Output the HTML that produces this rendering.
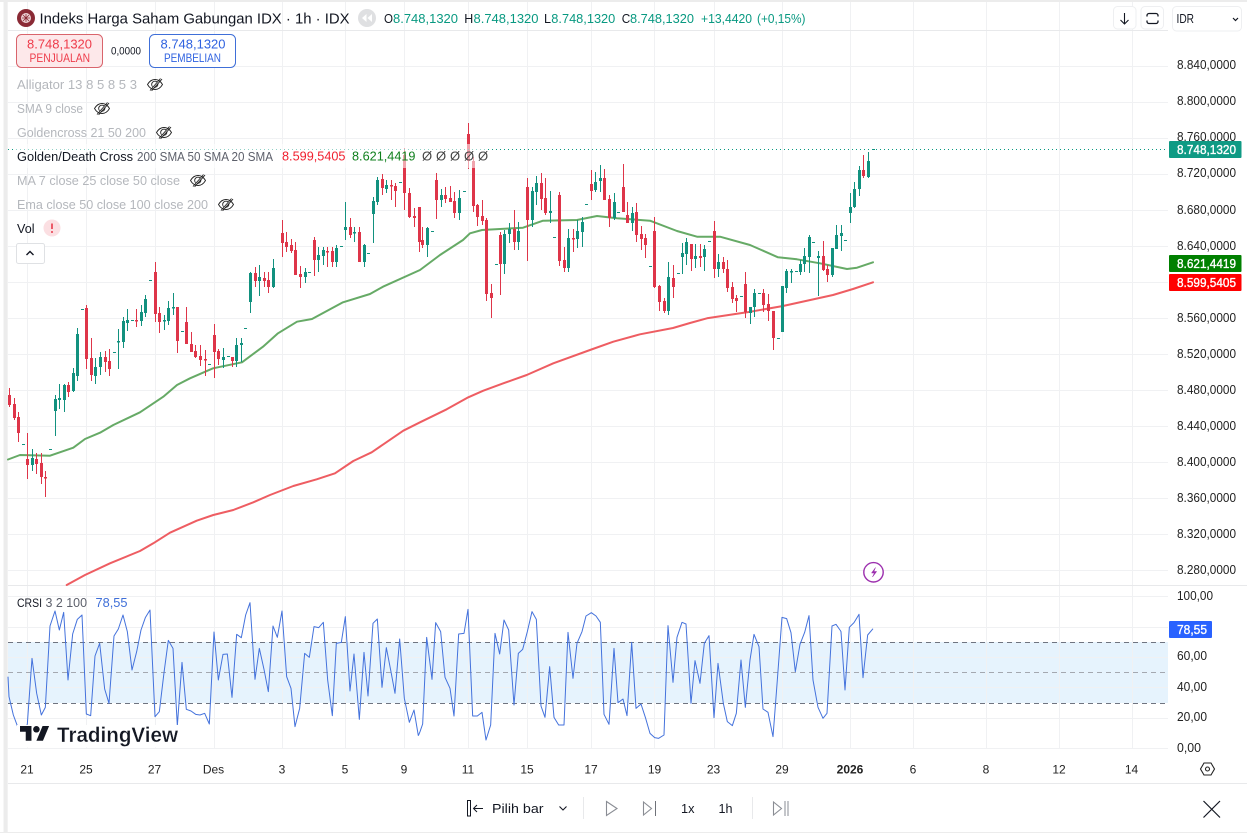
<!DOCTYPE html>
<html><head><meta charset="utf-8"><title>IDX</title>
<style>
html,body{margin:0;padding:0;background:#fff;width:1247px;height:833px;overflow:hidden}
svg{display:block;position:absolute;left:0;top:0}
text{font-family:"Liberation Sans",sans-serif;font-size:13px;fill:#131722;white-space:pre}
.p{font-size:12.5px;fill:#222}
.t{font-size:12px;fill:#222}
.d{fill:#b4b7bc}
.g{fill:#5d606b}
.v{fill:#089981}
.w{fill:#fff;stroke:#fff;stroke-width:.35px;font-size:12.5px}
</style></head><body>
<svg width="1247" height="833" viewBox="0 0 1247 833" xmlns="http://www.w3.org/2000/svg">
<defs>
<g id="eye" fill="none" stroke="#222" stroke-width=".9">
<path d="M-7.500 0C-5.500-3.500-2.800-5 0-5S5.500-3.500 7.500 0C5.500 3.500 2.800 5 0 5S-5.500 3.500-7.500 0Z"/>
<path d="M-2.500 2.200A3 3 0 0 1 2.500-2.200M2.700-1A3 3 0 0 1-1 2.700"/>
<path d="M-5 6L5.500-6M-3.400 6.300L7-5.400"/>
</g>
</defs>
<rect width="1247" height="833" fill="#fff"/>
<rect x="3.500" y="0" width="4.200" height="833" fill="#ececec"/>
<rect x="0" y="0" width="1247" height="2" fill="#ececec"/>
<rect x="0" y="832" width="1247" height="1" fill="#ececec"/>

<!-- band -->
<rect x="8" y="642" width="1160" height="61" fill="#e6f3fd"/>
<!-- grid -->
<path stroke="#f0f1f3" stroke-width="1" fill="none" d="M27.500 2V748M86.500 2V748M155.500 2V748M214.500 2V748M282.500 2V748M345.500 2V748M404.500 2V748M468.500 2V748M527.500 2V748M591.500 2V748M654.500 2V748M714.500 2V748M782.500 2V748M850.500 2V748M913.500 2V748M986.500 2V748M1059.500 2V748M1132.500 2V748
M8 66.500H1168M8 102.500H1168M8 138.500H1168M8 174.500H1168M8 210.500H1168M8 246.500H1168M8 282.500H1168M8 318.500H1168M8 354.500H1168M8 390.500H1168M8 426.500H1168M8 462.500H1168M8 498.500H1168M8 534.500H1168M8 570.500H1168
M8 596.500H1168M8 627.500H1168M8 657.500H1168M8 687.500H1168M8 718.500H1168M8 748.500H1168"/>
<path stroke="#e8e9eb" stroke-width="1" fill="none" d="M8 30.500H1168M8 585.500H1247M8 783.500H1247"/>

<!-- MA lines -->
<polyline fill="none" stroke="#ee5d62" stroke-width="2" stroke-linejoin="round" stroke-linecap="round" points="66.700,585 85,575 110,563.300 140,551 153.300,543.300 170,532.700 196.700,520.700 213.300,515 233.300,510 253.300,502.300 270,495 293.300,486 316.700,479.300 335,473.300 353.300,461 371.700,452.300 403.300,430.700 420,422.300 446.700,409.300 468.300,397.300 483.300,390.700 503.300,383.300 526.700,375 553.300,363.300 590,350 613.300,341.700 640,334.300 673,328 690,323 707,318.300 747,312.300 783,306 833,295 853,289 873,282.300"/>
<polyline fill="none" stroke="#66aa66" stroke-width="2" stroke-linejoin="round" stroke-linecap="round" points="8,459.500 20,455 50,455.700 73.300,447.700 85,439 100,432.700 113.300,425 140,412.300 163.300,396.700 177,385 190,378.300 213,368.300 242,362.300 263,346.700 278,333.300 297,321.700 312,319 343,302.300 370,294 383,286.700 420,270 440,255 463,240 470,233.300 482,230 523,227.700 543,220.700 577,220 597,216 617,218.300 650,220.700 677,231 697,236.700 720,236.700 750,245 778,257.300 797,259.300 820,263.300 847,269 857,267.700 873,262.300"/>

<!-- red wicks -->
<path stroke="#de3549" stroke-width="1" fill="none" d="M9.500 388V407M14.500 398V420M18.500 412V442M27.500 433V479M36.500 453V474M41.500 453V484M45.500 471V497M68.500 382V397M86.500 305V369M91.500 338V381M105.500 351V372M109.500 349V376M136.500 309V327M155.500 262V322M159.500 307V333M177.500 307V353M186.500 307V344M191.500 332V352M195.500 345V358M200.500 345V366M205.500 350V376M214.500 324V378M218.500 349V365M232.500 357V367M255.500 267V287M264.500 272V287M268.500 272V293M282.500 220V257M286.500 232V252M291.500 239V253M295.500 242V275M300.500 266V288M314.500 237V276M327.500 247V267M332.500 247V267M350.500 218V238M359.500 227V262M382.500 174V195M391.500 180V200M395.500 183V207M404.500 148V210M409.500 188V218M414.500 208V227M419.500 207V252M422.500 227V248M436.500 173V219M445.500 187V203M450.500 186V202M454.500 192V218M468.500 123V169M473.500 157V212M477.500 204V226M482.500 200V225M486.500 218V301M491.500 284V318M500.500 232V295M514.500 210V250M527.500 178V261M541.500 173V210M545.500 178V215M559.500 192V266M564.500 247V272M573.500 229V252M591.500 170V200M604.500 169V200M609.500 195V227M623.500 164V212M627.500 202V223M636.500 203V242M641.500 226V250M645.500 234V258M654.500 217V288M659.500 285V311M664.500 298V313M673.500 265V298M691.500 244V271M700.500 244V267M714.500 221V278M723.500 257V273M727.500 260V292M732.500 282V303M736.500 295V312M745.500 272V318M763.500 289V312M768.500 294V321M773.500 311V350M823.500 241V271M827.500 265V282M863.500 155V178"/>
<path stroke="#de3549" stroke-width="3" fill="none" d="M9.500 395V405M14.500 404V418M18.500 417V433M27.500 459V465M36.500 459V464M41.500 463V477M45.500 477V478.500M68.500 385V392M86.500 308V359M91.500 358V375M105.500 357V362M109.500 361V369M136.500 320V321.500M155.500 272V314M159.500 313V322M177.500 307V341M186.500 322V344M191.500 344V352M195.500 351V357M200.500 356V360M205.500 359V360.500M214.500 335V352M218.500 351V359M232.500 357V361M255.500 273V281M264.500 278V281M268.500 280V287M282.500 233V243M286.500 242V247M291.500 245V251M295.500 250V275M300.500 274V277M314.500 240V260M327.500 251V252.500M332.500 251V262M350.500 227V235M359.500 232V262M382.500 179V188M391.500 185V186.500M395.500 186V191M404.500 155V193M409.500 193V217M414.500 216V218M419.500 207V242M422.500 240V245M436.500 180V200M445.500 195V199M450.500 198V202M454.500 201V213M468.500 134V161M473.500 161V206M477.500 205V217M482.500 216V221M486.500 220V294M491.500 293V298M500.500 235V264M514.500 229V242M527.500 187V220M541.500 183V199M545.500 198V213M559.500 195V261M564.500 260V268M573.500 238V239.500M591.500 184V191M604.500 178V200M609.500 199V218M623.500 187V212M627.500 215V223M636.500 212V235M641.500 234V239M645.500 238V245M654.500 231V287M659.500 286V302M664.500 301V311M673.500 278V287M691.500 244V259M700.500 256V258M714.500 231V269M723.500 262V269M727.500 269V288M732.500 287V299M736.500 298V301M745.500 284V312M763.500 293V305M768.500 304V311M773.500 311V338M823.500 256V270M827.500 269V275M863.500 170V176"/>
<!-- green wicks -->
<path stroke="#12917f" stroke-width="1" fill="none" d="M32.500 449V471M55.500 395V436M59.500 384V409M64.500 384V412M73.500 368V392M77.500 328V381M95.500 358V384M100.500 352V375M118.500 329V369M123.500 317V348M127.500 309V331M141.500 305V326M145.500 295V317M164.500 315V330M168.500 301V325M173.500 293V315M223.500 348V368M236.500 338V367M241.500 338V362M250.500 272V313M259.500 265V296M273.500 259V288M305.500 268V283M318.500 247V272M323.500 247V265M336.500 245V267M345.500 202V240M354.500 227V242M364.500 244V267M373.500 197V243M377.500 177V205M386.500 180V193M427.500 227V257M441.500 189V207M459.500 190V220M504.500 230V274M509.500 223V243M518.500 222V250M532.500 187V227M536.500 176V205M550.500 191V223M568.500 229V272M577.500 220V248M582.500 217V247M595.500 172V192M600.500 165V192M614.500 193V220M632.500 207V231M668.500 262V315M682.500 243V274M686.500 238V265M695.500 244V268M704.500 245V271M718.500 254V277M750.500 307V324M754.500 289V317M782.500 286V332M786.500 269V293M791.500 269V283M800.500 260V275M804.500 248V272M809.500 235V273M818.500 251V296M832.500 248V277M836.500 225V249M841.500 225V251M850.500 193V223M854.500 182V208M859.500 166V196M868.500 152V178"/>
<path stroke="#12917f" stroke-width="3" fill="none" d="M32.500 458V465M55.500 399V411M59.500 398V400M64.500 385V400M73.500 373V391M77.500 334V376M95.500 367V376M100.500 357V367M118.500 341V342.500M123.500 321V342M127.500 320V323M141.500 312V321M145.500 299V313M164.500 320V321.500M168.500 308V321M173.500 307V308.500M223.500 357V360M236.500 345V361M241.500 343V345M250.500 273V302M259.500 277V281M273.500 268V287M305.500 272V277M318.500 255V260M323.500 250V256M336.500 248V262M345.500 227V230M354.500 232V233.500M364.500 245V262M373.500 201V214M377.500 180V202M386.500 185V189M427.500 228V245M441.500 195V200M459.500 198V213M504.500 234V264M509.500 229V234M518.500 231V242M532.500 191V220M536.500 183V192M550.500 211V213M568.500 238V268M577.500 231V239M582.500 222V232M595.500 182V190M600.500 178V181M614.500 202V218M632.500 213V223M668.500 277V311M682.500 253V257M686.500 242V254M695.500 256V259M704.500 249V257M718.500 262V269M750.500 307V313M754.500 293V307M782.500 286V332M786.500 271V288M791.500 271V272.500M800.500 264V272M804.500 256V264M809.500 237V257M818.500 256V258M832.500 248V275M836.500 235V249M841.500 233V236M850.500 207V213M854.500 189V207M859.500 170V189M868.500 161V177"/>
<!-- doji dashes -->
<path stroke="#12917f" stroke-width="1" fill="none" d="M22 444.500h3M49 449.500h3M81 309.500h3M113 352.500h3M131 320.500h3M149 280.500h3M181 331.500h3M208 364.500h3M227 356.500h3M244 328.500h3M308 272.500h3M340 246.500h3M367 253.500h3M399 182.500h3M431 231.500h3M463 191.500h3M495 264.500h3M553 237.500h3M585 204.500h3M617 212.500h3M649 266.500h3M677 273.500h3M708 241.500h3M740 296.500h3M758 293.500h3M777 338.500h3M795 271.500h3M812 242.500h3M844 240.500h3M872 149.500h3"/>

<!-- last price line -->
<path stroke="#089981" stroke-width="1" stroke-dasharray="1 3" fill="none" d="M8 149.500H1168"/>
<!-- legend fade -->
<rect x="16" y="144" width="472" height="24" fill="#fff" fill-opacity=".55"/>

<!-- CRSI -->
<path stroke="#6f7480" stroke-width="1" stroke-dasharray="5 4" fill="none" d="M8 642.500H1168M8 703.500H1168"/>
<path stroke="#a4a8b0" stroke-width="1" stroke-dasharray="5 4" fill="none" d="M8 672.500H1168"/>
<g fill="none" stroke="#4472dc" stroke-width="1" stroke-linejoin="round">
<polyline transform="translate(0,580) scale(.33333)" style="vector-effect:non-scaling-stroke" points="24,290 27,350 40,405 53,440 68,470 82,432 96,235 110,340 124,405 136,382 150,138 165,93 178,150 191,97 204,300 218,162 232,118 246,105 259,402 272,407 285,228 299,190 314,327 327,370 342,168 355,147 369,105 382,155 396,270 410,215 423,150 436,113 450,90 465,410 478,395 492,278 505,181 519,205 532,437 546,247 559,388 573,393 587,403 600,405 614,400 628,432 642,156 655,300 669,223 682,222 696,352 710,163 724,173 737,105 750,68 765,298 778,205 792,268 805,335 819,138 832,172 846,93 860,290 873,325 885,440 899,385 914,220 928,232 942,140 956,143 970,127 983,300 997,407 1009,190 1024,187 1036,110 1050,333 1062,222 1078,418 1092,217 1104,348 1119,130 1132,117 1146,322 1159,203 1172,270 1185,340 1199,177 1213,355 1228,427 1242,390 1255,467"/>
<polyline transform="translate(420,580) scale(.33333)" style="vector-effect:non-scaling-stroke" points="-5,467 0,455 8,432 20,172 36,298 47,128 62,155 75,292 90,325 102,408 116,162 132,160 144,88 158,408 172,408 186,397 198,480 212,435 225,160 239,222 252,120 266,150 282,375 295,220 308,208 322,155 336,95 349,118 363,378 375,412 389,260 402,412 416,435 432,435 444,157 459,295 471,190 486,155 498,108 514,98 528,108 541,127 552,403 567,433 582,205 594,368 609,357 621,407 635,187 648,385 663,372 677,415 690,460 704,473 716,475 732,465 744,137 759,307 771,172 786,127 798,132 813,370 825,242 840,310 853,190 867,167 882,413 894,250 910,370 922,425 937,437 949,400 963,240 976,382 990,240 1002,163 1017,200 1029,387 1044,397 1059,470 1072,300 1086,112 1100,116 1113,158 1126,275 1140,193 1154,157 1167,107 1179,300 1194,382 1209,415 1221,400 1236,138 1248,133 1260,150"/>
<polyline transform="translate(840,550) scale(.33333)" style="vector-effect:non-scaling-stroke" points="0,240 3,245 15,420 28,232 42,218 57,193 69,383 83,255 99,236"/>
</g>

<!-- TV logo -->
<rect x="17" y="725" width="163" height="22.500" fill="#fff"/>
<g transform="translate(20,722.700) scale(.82)" fill="#131722"><path d="M14 22H7V11H0V4h14v18zM28 22h-8l7.500-18h8L28 22z"/><circle cx="20" cy="8" r="4"/></g>
<text x="57" y="742" textLength="121" lengthAdjust="spacingAndGlyphs" style="font-size:21.500px;font-weight:700;stroke:#fff;stroke-width:.3px">TradingView</text>

<!-- header -->
<circle cx="26" cy="18" r="9" fill="#8a2a35"/>
<circle cx="26" cy="18" r="5" fill="#ecd3d5"/>
<path d="M22 18h8M26 14v8M23 15l6 6M29 15l-6 6" stroke="#8a2a35" stroke-width=".8"/>
<text x="39.500" y="23.500" textLength="310" lengthAdjust="spacingAndGlyphs" style="font-size:15px">Indeks Harga Saham Gabungan IDX · 1h · IDX</text>
<circle cx="367" cy="18" r="9" fill="#dfe0e2"/>
<path d="M366.500 14v8l-4.500-4zM372 14v8l-4.500-4z" fill="#fff"/>
<text x="384" y="23" textLength="9" lengthAdjust="spacingAndGlyphs">O</text>
<text class="v" x="393" y="23" textLength="65" lengthAdjust="spacingAndGlyphs">8.748,1320</text>
<text x="464.300" y="23" textLength="9" lengthAdjust="spacingAndGlyphs">H</text>
<text class="v" x="473.500" y="23" textLength="65" lengthAdjust="spacingAndGlyphs">8.748,1320</text>
<text x="544" y="23" textLength="7" lengthAdjust="spacingAndGlyphs">L</text>
<text class="v" x="551.300" y="23" textLength="64" lengthAdjust="spacingAndGlyphs">8.748,1320</text>
<text x="621.700" y="23" textLength="8.500" lengthAdjust="spacingAndGlyphs">C</text>
<text class="v" x="630" y="23" textLength="64" lengthAdjust="spacingAndGlyphs">8.748,1320</text>
<text class="v" x="701" y="23" textLength="51" lengthAdjust="spacingAndGlyphs">+13,4420</text>
<text class="v" x="757" y="23" textLength="48.500" lengthAdjust="spacingAndGlyphs">(+0,15%)</text>

<!-- buy/sell -->
<rect x="16.500" y="34.500" width="86" height="33" rx="5" fill="#fde8ea" stroke="#d9646c"/>
<text x="27" y="48.300" textLength="65" lengthAdjust="spacingAndGlyphs" style="font-size:13px;fill:#ee3b4a">8.748,1320</text>
<text x="29.500" y="62" textLength="60.500" lengthAdjust="spacingAndGlyphs" style="font-size:11.500px;fill:#ee3b4a">PENJUALAN</text>
<text x="111" y="54.500" textLength="30" lengthAdjust="spacingAndGlyphs" style="font-size:11px">0,0000</text>
<rect x="149.500" y="34.500" width="86" height="33" rx="5" fill="#fff" stroke="#3f6fd8"/>
<text x="160.500" y="48.300" textLength="65" lengthAdjust="spacingAndGlyphs" style="font-size:13px;fill:#2f62e0">8.748,1320</text>
<text x="164" y="62" textLength="57" lengthAdjust="spacingAndGlyphs" style="font-size:11.500px;fill:#2f62e0">PEMBELIAN</text>

<!-- legend -->
<text class="d" x="17" y="89" textLength="120" lengthAdjust="spacingAndGlyphs">Alligator 13 8 5 8 5 3</text>
<use href="#eye" x="155" y="84.500"/>
<text class="d" x="17" y="113" textLength="66" lengthAdjust="spacingAndGlyphs">SMA 9 close</text>
<use href="#eye" x="102" y="108.500"/>
<text class="d" x="17" y="137" textLength="129" lengthAdjust="spacingAndGlyphs">Goldencross 21 50 200</text>
<use href="#eye" x="164" y="132.500"/>
<text x="17" y="161" textLength="116" lengthAdjust="spacingAndGlyphs">Golden/Death Cross</text>
<text class="g" x="137" y="161" textLength="136" lengthAdjust="spacingAndGlyphs">200 SMA 50 SMA 20 SMA</text>
<text x="282" y="160.500" textLength="63.500" lengthAdjust="spacingAndGlyphs" style="fill:#f01f2e">8.599,5405</text>
<text x="352" y="160.500" textLength="63.500" lengthAdjust="spacingAndGlyphs" style="fill:#0f7f1c">8.621,4419</text>
<g style="fill:#444"><text x="422" y="160.500" style="fill:#444">Ø</text><text x="436" y="160.500" style="fill:#444">Ø</text><text x="450" y="160.500" style="fill:#444">Ø</text><text x="464" y="160.500" style="fill:#444">Ø</text><text x="478" y="160.500" style="fill:#444">Ø</text></g>
<text class="d" x="17" y="185" textLength="163" lengthAdjust="spacingAndGlyphs">MA 7 close 25 close 50 close</text>
<use href="#eye" x="198" y="180.500"/>
<text class="d" x="17" y="209" textLength="191" lengthAdjust="spacingAndGlyphs">Ema close 50 close 100 close 200</text>
<use href="#eye" x="226" y="204.500"/>
<text x="17" y="233" textLength="17.500" lengthAdjust="spacingAndGlyphs">Vol</text>
<circle cx="52" cy="228" r="8.500" fill="#fbdfe2"/>
<path d="M52 223.500v5.500" stroke="#e8394a" stroke-width="1.600"/><circle cx="52" cy="232" r="1" fill="#e8394a"/>
<rect x="16.500" y="243.500" width="28" height="20" rx="2" fill="#fff" stroke="#dfe1e4"/>
<path d="M26.500 255l3.500-3.500 3.500 3.500" fill="none" stroke="#131722" stroke-width="1.400"/>

<!-- CRSI legend -->
<text x="17" y="607" textLength="25" lengthAdjust="spacingAndGlyphs" style="font-size:12px">CRSI</text>
<text class="g" x="45.500" y="607" textLength="41.500" lengthAdjust="spacingAndGlyphs">3 2 100</text>
<text x="95.500" y="607" textLength="32" lengthAdjust="spacingAndGlyphs" style="fill:#3f6fd8">78,55</text>

<!-- bolt -->
<circle cx="873.500" cy="572.300" r="9.700" fill="#fff" stroke="#9c2fae" stroke-width="1.400"/>
<path d="M875.500 567.500l-4 5.500h2.800l-1.800 4 4.200-5.500h-2.800z" fill="#9c2fae" stroke="#9c2fae" stroke-width=".5"/>

<!-- right top buttons -->
<rect x="1113.500" y="6.500" width="22.500" height="22.500" rx="4" fill="#fff" stroke="#eeeff1"/>
<path d="M1124.500 13v11M1120.500 20l4 4 4-4" fill="none" stroke="#131722" stroke-width="1.100"/>
<rect x="1141" y="6.500" width="22.500" height="22.500" rx="4" fill="#fff" stroke="#eeeff1"/>
<path d="M1147 16.500v-1a2 2 0 0 1 2-2h7a2 2 0 0 1 2 2v1M1147 20.500v1a2 2 0 0 0 2 2h7a2 2 0 0 0 2-2v-1" fill="none" stroke="#131722" stroke-width="1.300"/>
<rect x="1172.500" y="6.500" width="69" height="24.500" rx="4" fill="#fff" stroke="#eeeff1"/>
<text x="1176.500" y="23" textLength="17.500" lengthAdjust="spacingAndGlyphs" style="font-size:12.500px">IDR</text>
<path d="M1233 18l2.500 2.500 2.500-2.500" fill="none" stroke="#131722" stroke-width="1.200"/>

<!-- price axis -->
<g class="pa">
<text class="p" x="1177" y="69" textLength="59" lengthAdjust="spacingAndGlyphs">8.840,0000</text>
<text class="p" x="1177" y="105" textLength="59" lengthAdjust="spacingAndGlyphs">8.800,0000</text>
<text class="p" x="1177" y="141" textLength="59" lengthAdjust="spacingAndGlyphs">8.760,0000</text>
<text class="p" x="1177" y="177" textLength="59" lengthAdjust="spacingAndGlyphs">8.720,0000</text>
<text class="p" x="1177" y="214" textLength="59" lengthAdjust="spacingAndGlyphs">8.680,0000</text>
<text class="p" x="1177" y="250" textLength="59" lengthAdjust="spacingAndGlyphs">8.640,0000</text>
<text class="p" x="1177" y="322" textLength="59" lengthAdjust="spacingAndGlyphs">8.560,0000</text>
<text class="p" x="1177" y="358" textLength="59" lengthAdjust="spacingAndGlyphs">8.520,0000</text>
<text class="p" x="1177" y="394" textLength="59" lengthAdjust="spacingAndGlyphs">8.480,0000</text>
<text class="p" x="1177" y="430" textLength="59" lengthAdjust="spacingAndGlyphs">8.440,0000</text>
<text class="p" x="1177" y="466" textLength="59" lengthAdjust="spacingAndGlyphs">8.400,0000</text>
<text class="p" x="1177" y="502" textLength="59" lengthAdjust="spacingAndGlyphs">8.360,0000</text>
<text class="p" x="1177" y="538" textLength="59" lengthAdjust="spacingAndGlyphs">8.320,0000</text>
<text class="p" x="1177" y="574" textLength="59" lengthAdjust="spacingAndGlyphs">8.280,0000</text>
</g>
<rect x="1169" y="141" width="72.500" height="17" rx="1" fill="#0f9a84"/>
<text class="w" x="1177" y="153.800" textLength="59" lengthAdjust="spacingAndGlyphs">8.748,1320</text>
<rect x="1169" y="255" width="72.500" height="17" rx="1" fill="#008000"/>
<text class="w" x="1177" y="267.800" textLength="59" lengthAdjust="spacingAndGlyphs">8.621,4419</text>
<rect x="1169" y="274" width="72.500" height="17" rx="1" fill="#ff0000"/>
<text class="w" x="1177" y="286.800" textLength="59" lengthAdjust="spacingAndGlyphs">8.599,5405</text>

<text class="p" x="1177" y="600" textLength="36" lengthAdjust="spacingAndGlyphs">100,00</text>
<text class="p" x="1177" y="660" textLength="30" lengthAdjust="spacingAndGlyphs">60,00</text>
<text class="p" x="1177" y="691" textLength="30" lengthAdjust="spacingAndGlyphs">40,00</text>
<text class="p" x="1177" y="721" textLength="30" lengthAdjust="spacingAndGlyphs">20,00</text>
<text class="p" x="1177" y="752" textLength="24" lengthAdjust="spacingAndGlyphs">0,00</text>
<rect x="1169" y="621" width="43" height="17" rx="1" fill="#2962ff"/>
<text class="w" x="1177" y="633.800" textLength="30" lengthAdjust="spacingAndGlyphs">78,55</text>

<!-- time axis -->
<g text-anchor="middle">
<text class="t" x="27" y="773.500">21</text>
<text class="t" x="86" y="773.500">25</text>
<text class="t" x="154.500" y="773.500">27</text>
<text class="t" x="213.500" y="773.500">Des</text>
<text class="t" x="282" y="773.500">3</text>
<text class="t" x="345" y="773.500">5</text>
<text class="t" x="404" y="773.500">9</text>
<text class="t" x="468" y="773.500">11</text>
<text class="t" x="527" y="773.500">15</text>
<text class="t" x="591" y="773.500">17</text>
<text class="t" x="654.500" y="773.500">19</text>
<text class="t" x="713.500" y="773.500">23</text>
<text class="t" x="782" y="773.500">29</text>
<text class="t" x="850" y="773.500" style="font-weight:700">2026</text>
<text class="t" x="913" y="773.500">6</text>
<text class="t" x="986" y="773.500">8</text>
<text class="t" x="1059" y="773.500">12</text>
<text class="t" x="1131.500" y="773.500">14</text>
</g>
<path d="M1200.500 769l3.500-6h7l3.500 6-3.500 6h-7z" fill="none" stroke="#222" stroke-width="1.100"/>
<circle cx="1207.500" cy="769" r="2" fill="none" stroke="#222" stroke-width="1.100"/>

<!-- bottom bar -->
<rect x="467.500" y="800.500" width="3" height="15.500" fill="none" stroke="#131722" stroke-width="1"/>
<path d="M483 808.500h-9.500M477 805l-3.500 3.500 3.500 3.500" fill="none" stroke="#131722" stroke-width="1"/>
<text x="492" y="813" textLength="51.500" lengthAdjust="spacingAndGlyphs">Pilih bar</text>
<path d="M559.500 806.500l3.500 3.500 3.500-3.500" fill="none" stroke="#131722" stroke-width="1.100"/>
<path d="M583.500 797V819M752.500 797V819" stroke="#e8e9eb" fill="none"/>
<path d="M606.500 801.500l10.500 7-10.500 7z" fill="none" stroke="#8a8d94" stroke-width="1.100"/>
<path d="M643.500 802l8 6.500-8 6.500z" fill="none" stroke="#8a8d94" stroke-width="1.100"/>
<path d="M655.500 801v15" fill="none" stroke="#6f7279" stroke-width="1"/>
<text x="681" y="813" textLength="13.500" lengthAdjust="spacingAndGlyphs">1x</text>
<text x="718.500" y="813" textLength="14" lengthAdjust="spacingAndGlyphs">1h</text>
<path d="M773.500 802l8 6.500-8 6.500z" fill="none" stroke="#8a8d94" stroke-width="1.100"/>
<path d="M785 801v15M788 801v15" fill="none" stroke="#8a8d94" stroke-width="1"/>
<path d="M1203.500 801l16.500 16.500M1220 801l-16.500 16.500" fill="none" stroke="#131722" stroke-width="1.200"/>
</svg>
</body></html>
